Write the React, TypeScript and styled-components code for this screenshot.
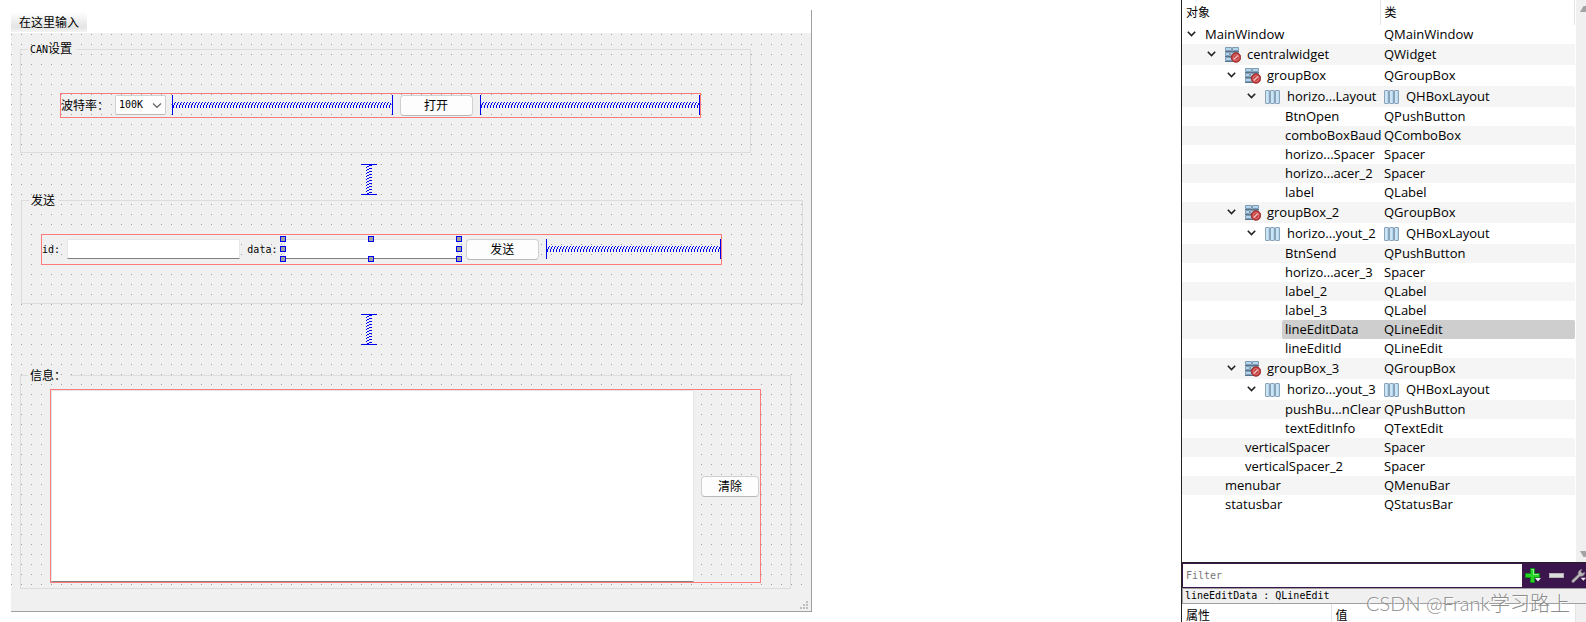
import React from "react";
import styled, { createGlobalStyle, css } from "styled-components";

const GlobalStyle = createGlobalStyle`
  *, *::before, *::after { box-sizing: border-box; }
  body {
    margin: 0;
    background: #fff;
    color: #000;
    font: 12px/16px "Noto Sans", "Noto Sans CJK SC", sans-serif;
  }
  button, input, select, textarea { font: inherit; color: inherit; margin: 0; }
`;

const Page = styled.main`
  display: grid;
  grid-template-columns: minmax(0, 1fr) 405px;
  height: 100vh;
  min-height: 620px;
  overflow: hidden;
`;

/* ---------- Form designer ---------- */

const Workspace = styled.section`
  padding: 10px 20px 10px 11px;
`;

const FormWindow = styled.div`
  max-width: 801px;
  border: solid #a0a0a0;
  border-width: 0 1px 1px 0;
  background: #f0f0f0;
`;

const MenuBar = styled.nav`
  display: flex;
  align-items: center;
  height: 23px;
  background: #fff;
`;

const MenuButton = styled.button`
  height: 20px;
  padding: 1px 8px 0;
  border: 0;
  background: linear-gradient(#fff, #e4e4e4 75%, #f4f4f4);
  line-height: 19px;
`;

const Canvas = styled.div`
  padding: 10px 0 1px;
  background-color: #f0f0f0;
  background-image:
    linear-gradient(90deg, transparent 1px, #f0f0f0 1px),
    linear-gradient(#a0a0a0 1px, #f0f0f0 1px);
  background-size: 10px 10px;
  background-position: 0 1px;
`;

const GroupBox = styled.fieldset<{ $margin: string }>`
  min-width: 0;
  margin: ${(p) => p.$margin};
  padding: 0;
  border: 1px solid #dcdcdc;
`;

const GroupTitle = styled.legend`
  margin-left: 7px;
  padding: 0 4px 0 2px;
  line-height: 11px;
`;

const GroupBody = styled.div<{ $padding: string }>`
  padding: ${(p) => p.$padding};
`;

const LayoutRow = styled.div<{ $height: number }>`
  display: flex;
  align-items: center;
  gap: 6px;
  height: ${(p) => p.$height}px;
  border: 1px solid #ff7a7a;
`;

const Mono = styled.span`
  font-family: "DejaVu Sans Mono", monospace;
  font-size: 10px;
`;

const FieldLabel = styled.label`
  flex: none;
  white-space: nowrap;
`;

const MonoLabel = styled(FieldLabel)`
  font-family: "DejaVu Sans Mono", monospace;
  font-size: 10px;
`;

const PushButton = styled.button<{ $width: number }>`
  flex: none;
  width: ${(p) => p.$width}px;
  height: 21px;
  margin: 0 1px;
  padding: 1px 0 0;
  border: 1px solid #d0d0d0;
  border-bottom-color: #b8b8b8;
  border-radius: 4px;
  background: #fdfdfd;
  line-height: 18px;
`;

const ComboWrap = styled.span`
  position: relative;
  flex: none;
  display: flex;
  margin-bottom: 1px;

  svg {
    position: absolute;
    right: 4px;
    top: 7px;
    pointer-events: none;
  }
`;

const Combo = styled.select`
  appearance: none;
  width: 51px;
  height: 20px;
  padding: 0 0 0 3px;
  border: 1px solid #d0d0d0;
  border-bottom-color: #b8b8b8;
  border-radius: 2px;
  background: #fdfdfd;
  font-family: "DejaVu Sans Mono", monospace;
  font-size: 10px;
`;

const fieldFrame = css`
  border: 1px solid #e6e6e6;
  border-bottom-color: #808080;
  background: #fff;
  outline: 0;
`;

const LineEditWrap = styled.span`
  position: relative;
  flex: 1;
  min-width: 0;
  display: flex;
  height: 20px;
  margin-bottom: 1px;
  padding: 0 1px;
`;

const LineEdit = styled.input`
  ${fieldFrame}
  width: 100%;
  min-width: 0;
  height: 20px;
  padding: 0 4px;
`;

const TextEdit = styled.textarea`
  ${fieldFrame}
  flex: 1;
  min-width: 0;
  height: 100%;
  padding: 4px;
  resize: none;
`;

const Handle = styled.i<{ $col: number; $row: number }>`
  position: absolute;
  left: ${(p) => p.$col * 50}%;
  top: ${(p) => p.$row * 50}%;
  width: 6px;
  height: 6px;
  margin: -3px 0 0 -3px;
  border: 1px solid #0000f0;
  background: #a0a0a0;
`;

const HSpring = styled.span`
  flex: 1;
  min-width: 0;
  display: flex;
  align-items: center;
  height: 20px;
  margin-bottom: 1px;
  border: solid #0000f0;
  border-width: 0 1px;
`;

const VSpring = styled.div<{ $margin: string }>`
  display: flex;
  justify-content: center;
  width: 16px;
  height: 31px;
  margin: ${(p) => p.$margin};
  border: solid #0000f0;
  border-width: 1px 0;
`;

const StatusBar = styled.footer`
  display: flex;
  justify-content: flex-end;
  align-items: flex-end;
  height: 21px;
  padding: 0 3px 2px 0;
`;

/* ---------- Inspector dock ---------- */

const Dock = styled.aside`
  position: relative;
  display: grid;
  grid-template-rows: minmax(0, 1fr) 25px 16px 18px;
  min-width: 0;
  min-height: 0;
  border-left: 1px solid #222;
  overflow: hidden;
`;

const TreePane = styled.div`
  display: flex;
  min-height: 0;
  border-bottom: 1px solid #222;
`;

const TreeArea = styled.div`
  flex: 1;
  min-width: 0;
  overflow: hidden;
`;

const Tree = styled.table`
  width: 100%;
  table-layout: fixed;
  border-collapse: collapse;
  font-family: "Open Sans", "Noto Sans CJK SC", sans-serif;
  font-size: 13px;

  td, th { padding: 0; }
`;

const NameCol = styled.col`
  width: 198px;
`;

const HeadCell = styled.th`
  height: 25px;
  border-right: 1px solid #e4e4e4;
  font-size: 12px;
  font-weight: 400;
  text-align: left;
  text-indent: 4px;
`;

const Row = styled.tr<{ $alt: boolean; $tall: boolean }>`
  height: ${(p) => (p.$tall ? 21 : 19)}px;
  background: ${(p) => (p.$alt ? "#f5f5f5" : "#fff")};
  line-height: 19px;
`;

const NameCell = styled.div<{ $level: number }>`
  display: flex;
  align-items: stretch;
  height: 100%;
  padding-left: ${(p) => p.$level * 20}px;
  white-space: nowrap;
`;

const Expander = styled.span`
  flex: none;
  display: flex;
  align-items: center;
  width: 20px;
  padding: 0 0 2px 5px;
`;

const Item = styled.span<{ $selected?: boolean }>`
  flex: 1;
  display: flex;
  align-items: center;
  gap: 6px;
  padding-left: 3px;
  border-radius: 2px 0 0 2px;
  background: ${(p) => (p.$selected ? "#cecece" : "transparent")};
`;

const ClassCell = styled.div<{ $selected?: boolean }>`
  display: flex;
  align-items: center;
  gap: 6px;
  padding-left: 4px;
  border-radius: 0 2px 2px 0;
  background: ${(p) => (p.$selected ? "#cecece" : "transparent")};
`;

const ScrollTrack = styled.div`
  flex: none;
  display: flex;
  flex-direction: column;
  justify-content: space-between;
  width: 11px;
  padding: 6px 0 5px 4px;
  border-left: 1px solid #fff;
  background: #f0f0f0;
  overflow: hidden;
`;

const FilterBar = styled.div`
  display: flex;
  align-items: stretch;
  padding: 1px 0 1px 1px;
  background: #3b164d;
`;

const FilterInput = styled.input`
  flex: 1;
  min-width: 0;
  padding: 0 3px;
  border: 0;
  outline: 0;
  background: #fff;
  font-family: "DejaVu Sans Mono", monospace;
  font-size: 10px;

  &::placeholder { color: #777; opacity: 1; }
`;

const ToolButton = styled.button<{ $width: number }>`
  flex: none;
  display: flex;
  align-items: center;
  width: ${(p) => p.$width}px;
  padding: 0 0 0 3px;
  border: 0;
  background: none;
  overflow: hidden;
`;

const SelectionBar = styled.div`
  padding-left: 2px;
  border: solid #a0a0a0;
  border-width: 1px 0 1px 1px;
  background: #f0f0f0;
  font-family: "DejaVu Sans Mono", monospace;
  font-size: 10px;
  line-height: 14px;
`;

const PropertyPane = styled.div`
  display: flex;
  overflow: hidden;
`;

const PropertyTable = styled.table`
  flex: 1;
  table-layout: fixed;
  border-collapse: collapse;
  height: 24px;
  line-height: 12px;

  th {
    padding: 0 0 0 4px;
    border-right: 1px solid #e4e4e4;
    font-weight: 400;
    text-align: left;
  }
  th:first-child { width: 149px; }
`;

const PropertyTrack = styled.div`
  flex: none;
  width: 10px;
  background: #f0f0f0;
`;

const Watermark = styled.span`
  position: absolute;
  right: 16px;
  bottom: 5px;
  color: #8c8c8c;
  font: 300 20px/28px Lato, "Noto Sans CJK SC", sans-serif;
  text-shadow: 1px 1px 0 #fff;
  white-space: nowrap;
  pointer-events: none;
`;

/* ---------- Drawings ---------- */

function HorizontalSpring({ id }: { id: string }) {
  return (
    <HSpring>
      <svg width="100%" height="6" shapeRendering="crispEdges" aria-hidden="true">
        <defs>
          <pattern id={id} width="3" height="6" patternUnits="userSpaceOnUse">
            <path fill="#0000f0" d="M0 3h1v3h-1zM1 1h1v2h-1zM2 0h1v1h-1z" />
          </pattern>
        </defs>
        <rect width="100%" height="6" fill={`url(#${id})`} />
      </svg>
    </HSpring>
  );
}

function VerticalSpring({ id, margin }: { id: string; margin: string }) {
  return (
    <VSpring $margin={margin}>
      <svg width="6" height="29" shapeRendering="crispEdges" aria-hidden="true">
        <defs>
          <pattern id={id} width="6" height="3" patternUnits="userSpaceOnUse">
            <path fill="#0000f0" d="M3 0h3v1h-3zM1 1h2v1h-2zM0 2h1v1h-1z" />
          </pattern>
        </defs>
        <rect width="6" height="29" fill={`url(#${id})`} />
      </svg>
    </VSpring>
  );
}

function Chevron() {
  return (
    <svg width="9" height="6" viewBox="0 0 9 6" aria-hidden="true">
      <path d="M0.8 0.8L4.5 4.5L8.2 0.8" fill="none" stroke="#222" strokeWidth="1.6" />
    </svg>
  );
}

function NoLayoutIcon() {
  return (
    <svg width="16" height="16" viewBox="0 0 16 16" aria-hidden="true">
      <g fill="#b4d6ec" stroke="#7f9bb3" strokeWidth="1">
        <path d="M0.5 0.5h6v3h-6zM7.5 0.5h6v3h-6z" />
        <path d="M0.5 5.5h4v3h-4zM5.5 5.5h8v3h-8z" />
        <path d="M0.5 10.5h6v3h-6z" />
      </g>
      <path d="M0 4h14v1h-14zM0 9h14v1h-14zM0 14h8v1h-8z" fill="#5b7388" />
      <circle cx="11" cy="10.5" r="4.8" fill="#c33a3a" stroke="#8f2525" strokeWidth="0.8" />
      <path d="M8.6 12.6L13.2 8.2" stroke="#eebcbc" strokeWidth="1.5" />
      <circle cx="11" cy="10.5" r="2.9" fill="none" stroke="#dc8484" strokeWidth="0.8" />
    </svg>
  );
}

function HBoxIcon() {
  return (
    <svg width="16" height="14" viewBox="-1 0 16 14" aria-hidden="true">
      {[0, 5, 10].map((x) => (
        <g key={x}>
          <rect x={x - 0.5} y="0.5" width="4" height="13" rx="0.5" fill="#b4d8f0" stroke="#8ba3b8" />
          <path d={`M${x + 1} 1v12`} stroke="#e2f2fb" />
        </g>
      ))}
    </svg>
  );
}

function ScrollArrow({ down }: { down?: boolean }) {
  return (
    <svg width="12" height="6" viewBox="0 0 12 6" aria-hidden="true">
      <path d={down ? "M0 0h11l-3.5 6h-4z" : "M0 6h11l-3.5 -6h-4z"} fill="#a3a3a3" />
    </svg>
  );
}

/* ---------- Data ---------- */

type Icon = "none" | "hbox";
interface Node {
  name: string;
  type: string;
  level: number;
  icon?: Icon;
  open?: boolean;
  selected?: boolean;
}

const nodes: Node[] = [
  { name: "MainWindow", type: "QMainWindow", level: 0, open: true },
  { name: "centralwidget", type: "QWidget", level: 1, icon: "none", open: true },
  { name: "groupBox", type: "QGroupBox", level: 2, icon: "none", open: true },
  { name: "horizo...Layout", type: "QHBoxLayout", level: 3, icon: "hbox", open: true },
  { name: "BtnOpen", type: "QPushButton", level: 4 },
  { name: "comboBoxBaud", type: "QComboBox", level: 4 },
  { name: "horizo...Spacer", type: "Spacer", level: 4 },
  { name: "horizo...acer_2", type: "Spacer", level: 4 },
  { name: "label", type: "QLabel", level: 4 },
  { name: "groupBox_2", type: "QGroupBox", level: 2, icon: "none", open: true },
  { name: "horizo...yout_2", type: "QHBoxLayout", level: 3, icon: "hbox", open: true },
  { name: "BtnSend", type: "QPushButton", level: 4 },
  { name: "horizo...acer_3", type: "Spacer", level: 4 },
  { name: "label_2", type: "QLabel", level: 4 },
  { name: "label_3", type: "QLabel", level: 4 },
  { name: "lineEditData", type: "QLineEdit", level: 4, selected: true },
  { name: "lineEditId", type: "QLineEdit", level: 4 },
  { name: "groupBox_3", type: "QGroupBox", level: 2, icon: "none", open: true },
  { name: "horizo...yout_3", type: "QHBoxLayout", level: 3, icon: "hbox", open: true },
  { name: "pushBu...nClear", type: "QPushButton", level: 4 },
  { name: "textEditInfo", type: "QTextEdit", level: 4 },
  { name: "verticalSpacer", type: "Spacer", level: 2 },
  { name: "verticalSpacer_2", type: "Spacer", level: 2 },
  { name: "menubar", type: "QMenuBar", level: 1 },
  { name: "statusbar", type: "QStatusBar", level: 1 },
];

const handles = [
  [0, 0], [1, 0], [2, 0],
  [0, 1], [2, 1],
  [0, 2], [1, 2], [2, 2],
];

/* ---------- Views ---------- */

function Designer() {
  return (
    <Workspace>
      <FormWindow>
        <MenuBar>
          <MenuButton type="button">在这里输入</MenuButton>
        </MenuBar>
        <Canvas>
          <GroupBox $margin="0 60px 0 9px">
            <GroupTitle><Mono>CAN</Mono>设置</GroupTitle>
            <GroupBody $padding="38px 49px 34px 39px">
              <LayoutRow $height={25}>
                <FieldLabel htmlFor="baud">波特率{"\uFF1A"}</FieldLabel>
                <ComboWrap>
                  <Combo id="baud" defaultValue="100K">
                    <option>100K</option>
                  </Combo>
                  <svg width="10" height="7" viewBox="0 0 10 7" aria-hidden="true">
                    <path d="M1 1.5L5 5.3L9 1.5" fill="none" stroke="#666" strokeWidth="1.2" />
                  </svg>
                </ComboWrap>
                <HorizontalSpring id="spring-a" />
                <PushButton type="button" $width={73}>打开</PushButton>
                <HorizontalSpring id="spring-b" />
              </LayoutRow>
            </GroupBody>
          </GroupBox>

          <VerticalSpring id="spring-c" margin="11px 0 0 350px" />

          <GroupBox $margin="0 8px 0 10px">
            <GroupTitle>发送</GroupTitle>
            <GroupBody $padding="28px 80px 38px 19px">
              <LayoutRow $height={31}>
                <MonoLabel htmlFor="line-id">id:</MonoLabel>
                <LineEditWrap>
                  <LineEdit id="line-id" type="text" />
                </LineEditWrap>
                <MonoLabel htmlFor="line-data">data:</MonoLabel>
                <LineEditWrap>
                  <LineEdit id="line-data" type="text" />
                  {handles.map(([col, row]) => (
                    <Handle key={`${col}-${row}`} $col={col} $row={row} />
                  ))}
                </LineEditWrap>
                <PushButton type="button" $width={73}>发送</PushButton>
                <HorizontalSpring id="spring-d" />
              </LayoutRow>
            </GroupBody>
          </GroupBox>

          <VerticalSpring id="spring-e" margin="10px 0 0 350px" />

          <GroupBox $margin="25px 20px 0 9px">
            <GroupTitle>信息{"\uFF1A"}</GroupTitle>
            <GroupBody $padding="8px 29px 5px 29px">
              <LayoutRow $height={194}>
                <TextEdit aria-label="信息" />
                <PushButton type="button" $width={58}>清除</PushButton>
              </LayoutRow>
            </GroupBody>
          </GroupBox>
        </Canvas>
        <StatusBar>
          <svg width="8" height="8" viewBox="0 0 8 8" aria-hidden="true">
            <path
              d="M6 0h2v2h-2zM3 3h2v2h-2zM6 3h2v2h-2zM0 6h2v2h-2zM3 6h2v2h-2zM6 6h2v2h-2z"
              fill="#bfbfbf"
            />
          </svg>
        </StatusBar>
      </FormWindow>
    </Workspace>
  );
}

function ObjectTree() {
  return (
    <TreePane>
      <TreeArea>
        <Tree>
          <colgroup>
            <NameCol />
            <col />
          </colgroup>
          <thead>
            <tr>
              <HeadCell scope="col">对象</HeadCell>
              <HeadCell scope="col">类</HeadCell>
            </tr>
          </thead>
          <tbody>
            {nodes.map((n, i) => (
              <Row key={n.name} $alt={i % 2 === 1} $tall={!!n.icon}>
                <td>
                  <NameCell $level={n.level}>
                    <Expander>{n.open && <Chevron />}</Expander>
                    <Item $selected={n.selected}>
                      {n.icon === "none" && <NoLayoutIcon />}
                      {n.icon === "hbox" && <HBoxIcon />}
                      {n.name}
                    </Item>
                  </NameCell>
                </td>
                <td>
                  <ClassCell $selected={n.selected}>
                    {n.icon === "hbox" && <HBoxIcon />}
                    {n.type}
                  </ClassCell>
                </td>
              </Row>
            ))}
          </tbody>
        </Tree>
      </TreeArea>
      <ScrollTrack>
        <ScrollArrow />
        <ScrollArrow down />
      </ScrollTrack>
    </TreePane>
  );
}

function Inspector() {
  return (
    <Dock>
      <ObjectTree />
      <FilterBar>
        <FilterInput type="text" placeholder="Filter" aria-label="Filter" />
        <ToolButton type="button" $width={24} aria-label="Add">
          <svg width="17" height="16" viewBox="0 0 17 16" aria-hidden="true">
            <path
              d="M5.5 0.5h4v5h5v4h-5v5h-4v-5h-5v-4h5z"
              fill="#25d425"
              stroke="#0f8f1a"
            />
            <path d="M6.5 1.5h2v5h5" fill="none" stroke="#8df58a" />
            <path d="M10 10h6l-3 3.5z" fill="#eee" />
          </svg>
        </ToolButton>
        <ToolButton type="button" $width={22} aria-label="Remove">
          <svg width="15" height="5" viewBox="0 0 15 5" aria-hidden="true">
            <rect x="0.5" y="0.5" width="14" height="4" fill="#dcdcdc" stroke="#b4b4b4" />
          </svg>
        </ToolButton>
        <ToolButton type="button" $width={18} aria-label="Configure">
          <svg width="17" height="16" viewBox="0 0 17 16" aria-hidden="true">
            <path
              d="M1 13.2L8.2 6.3C7.7 3.6 9.3 1 12.3 0.6L11 3.2L12.6 5.1L15.6 3.8C15.8 6.8 13.2 8.7 10.2 8.2L3.2 15.2C1.8 16 0.3 14.6 1 13.2Z"
              fill="#b9b9b9"
              stroke="#8a8a8a"
              strokeWidth="0.7"
            />
            <path d="M11 10h6l-3 3.5z" fill="#eee" />
          </svg>
        </ToolButton>
      </FilterBar>
      <SelectionBar>lineEditData : QLineEdit</SelectionBar>
      <PropertyPane>
        <PropertyTable>
          <thead>
            <tr>
              <th scope="col">属性</th>
              <th scope="col">值</th>
            </tr>
          </thead>
        </PropertyTable>
        <PropertyTrack />
      </PropertyPane>
      <Watermark>CSDN @Frank学习路上</Watermark>
    </Dock>
  );
}

export default function App() {
  return (
    <Page>
      <GlobalStyle />
      <Designer />
      <Inspector />
    </Page>
  );
}
